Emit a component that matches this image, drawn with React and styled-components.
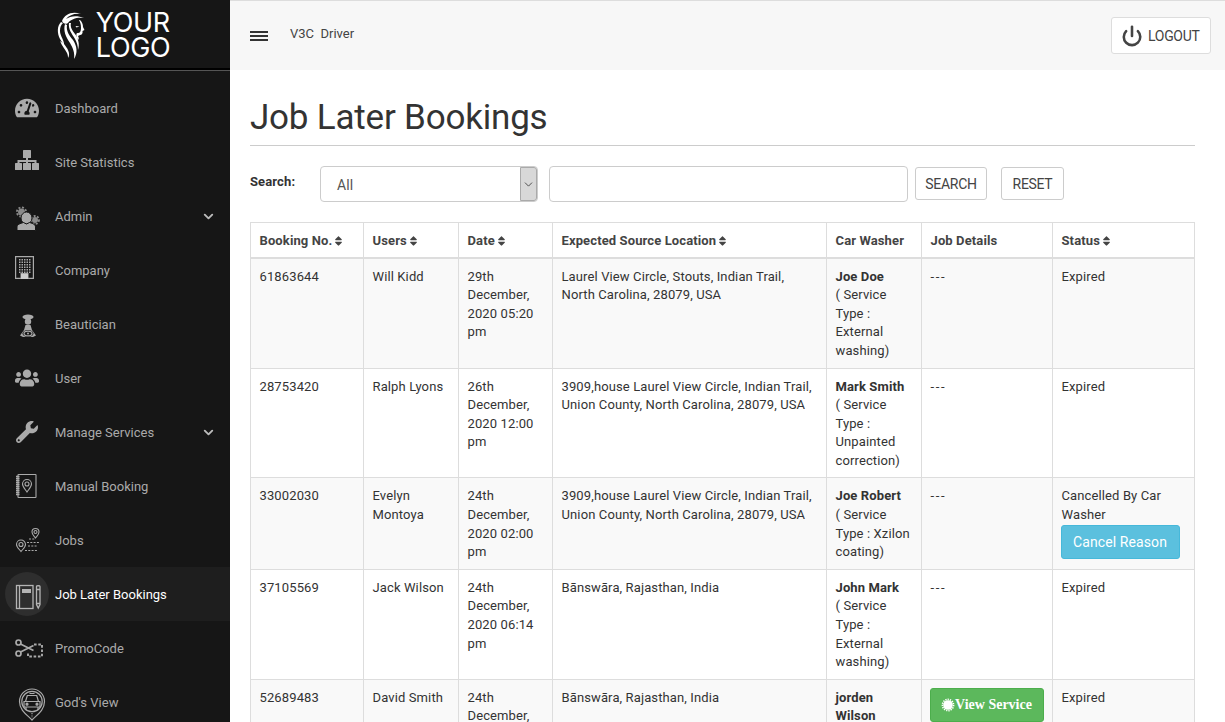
// Imports
import React from "react";
import styled, { createGlobalStyle } from "styled-components";
import { FaTachometerAlt, FaUsers, FaWrench, FaSort } from "react-icons/fa";
import { ChevronDown, Power } from "lucide-react";

// Global
const GlobalStyle = createGlobalStyle`
	html, body { margin: 0; padding: 0; height: 100%; overflow: hidden; background: #fff; }
	body { font-family: Roboto, "Noto Sans", sans-serif; font-size: 13px; line-height: 18.57px; letter-spacing: 0.12px; color: #333; }
	* { box-sizing: border-box; }
`;

// Drawn icons, all on a 44x44 canvas so they sit where the circle is
const SitemapIcon = () => (
	<DrawnSvg viewBox="0 0 44 44" $stroke="#aaa" $strokeW="2">
		<path d="M22 17v6M13.500 24v-3h17v3" />
		<g fill="#aaa" stroke="none">
			<rect x="18" y="10" width="8" height="8" rx="0.500" />
			<rect x="10" y="23" width="7" height="7" rx="0.500" />
			<rect x="18" y="23" width="8" height="7" rx="0.500" />
			<rect x="27" y="23" width="7" height="7" rx="0.500" />
		</g>
	</DrawnSvg>
);

const AdminIcon = () => (
	<DrawnSvg viewBox="0 0 44 44" $fill>
		<circle cx="16.500" cy="18" r="3.500" fill="#8a8a8a" />
		<circle cx="16.500" cy="18" r="4.600" fill="none" stroke="#8a8a8a" strokeWidth="1.800" strokeDasharray="2 1.600" />
		<circle cx="30" cy="26" r="3" fill="#8a8a8a" />
		<circle cx="30" cy="26" r="4" fill="none" stroke="#8a8a8a" strokeWidth="1.800" strokeDasharray="2 1.400" />
		<ellipse cx="21.500" cy="24" rx="5.500" ry="6" stroke="#161616" strokeWidth="1" />
		<path d="M12 36.500v-3.500c0-2.500 3-3.500 6.500-4.500l3 1.500 3-1.500c3.500 1 6 2 6 4.500v3.500z" stroke="#161616" strokeWidth="1" />
	</DrawnSvg>
);

const CompanyIcon = () => {
	const cols = [14, 16.500, 19, 21.500, 24];
	const rows = [11, 13.500, 16, 18.500, 21, 23.500];
	return (
		<DrawnSvg viewBox="0 0 44 44" $fill>
			<path fillRule="evenodd" d="M10 8h19v23H10zM11.200 9.200v20.600h4.300v-4.800h8v4.800h4.300V9.200z" />
			{rows.map((y) => cols.map((x) => <rect key={`${x}-${y}`} x={x} y={y} width="1.500" height="1.500" />))}
			<rect x="16" y="26" width="7" height="5" fill="#ccc" />
		</DrawnSvg>
	);
};

const BeauticianIcon = () => (
	<DrawnSvg viewBox="0 0 44 44" $fill>
		<g transform="translate(0 2.500)">
			<ellipse cx="23" cy="12.500" rx="5.500" ry="2.600" />
			<circle cx="23" cy="17" r="3.200" />
			<path d="M20.500 20.500h5l1.500 5 4 5.500-3 1.500h-10l-3-1.500 4-5.500z" />
			<ellipse cx="23" cy="29" rx="5.500" ry="3.500" fill="#161616" />
			<ellipse cx="23" cy="29" rx="4" ry="2.400" fill="none" stroke="#aaa" strokeWidth="1.200" />
			<circle cx="23" cy="29" r="1" />
		</g>
	</DrawnSvg>
);

const ManualIcon = () => (
	<DrawnSvg viewBox="0 0 44 44">
		<rect x="13" y="10.500" width="18" height="23" rx="0.500" />
		<path d="M11 12.500h3.500M11 14.500h3.500M11 16.500h3.500M11 18.500h3.500M11 20.500h3.500M11 22.500h3.500M11 24.500h3.500M11 26.500h3.500M11 28.500h3.500M11 30.500h3.500" strokeWidth="1.300" />
		<path d="M22 28c-2-3-4.500-5.300-4.500-8a4.500 4.500 0 0 1 9 0c0 2.700-2.500 5-4.500 8z" />
		<circle cx="22" cy="20" r="2" />
	</DrawnSvg>
);

const JobsIcon = () => (
	<DrawnSvg viewBox="0 0 44 44">
		<path d="M16 33.500c-2-2.500-4.500-4.500-4.500-7a4.500 4.500 0 0 1 9 0c0 2.500-2.500 4.500-4.500 7z" />
		<circle cx="16" cy="26.500" r="2" />
		<path d="M30.500 20c-1.500-2-3.500-3.500-3.500-6a3.500 3.500 0 0 1 7 0c0 2.500-2 4-3.500 6z" />
		<circle cx="30.500" cy="14" r="1.500" />
		<path d="M24 21h6M22 24.500h12M23 28h9M20 32.500h12" strokeDasharray="2 1.300" />
	</DrawnSvg>
);

const BookingIcon = () => (
	<DrawnSvg viewBox="0 0 44 44" $stroke="#b4b4b4" $strokeW="1.300">
		<rect x="11.500" y="13.500" width="16.500" height="23" />
		<path d="M14.500 13.500v23" />
		<rect x="17" y="17" width="9" height="4" fill="#b4b4b4" stroke="none" />
		<path d="M31.500 14.500c0-1 3.500-1 3.500 0v18l-1.750 3.500-1.750-3.500zM31.500 17.500h3.500M31.500 31.500h3.500" />
	</DrawnSvg>
);

const PromoIcon = () => (
	<DrawnSvg viewBox="0 0 44 44" $strokeW="1.700">
		<circle cx="13.500" cy="16.500" r="2.500" />
		<circle cx="13.500" cy="27.500" r="2.500" />
		<path d="M15.500 18l13 6.500M15.500 26l13-6.500" />
		<path d="M29 18.500h8v12h-14v-3" strokeDasharray="2.600 1.700" strokeWidth="1.900" />
	</DrawnSvg>
);

const GodsViewIcon = () => (
	<DrawnSvg viewBox="0 0 44 44" $strokeW="1.200">
		<path d="M27 40c-4-4.500-12.500-9-12.500-18.500a12.500 12.500 0 0 1 25 0C39.500 31 31 35.500 27 40z" />
		<circle cx="27" cy="21.500" r="10.200" />
		<path d="M20.500 21.500l1.800-6h9.400l1.800 6zM19 21.500h16v5.500H19zM21 27v2.500M33 27v2.500M24.500 13.500h5" />
		<circle cx="22" cy="24.200" r="1" fill="#aaa" />
		<circle cx="32" cy="24.200" r="1" fill="#aaa" />
		<path d="M27 33v5" strokeDasharray="1.200 1.200" />
	</DrawnSvg>
);

const LogoMark = () => (
	<LogoSvg viewBox="0 0 28 48">
		<path d="M5 10C8 3 15 0 24 3 18 2 12 4 9 8c4-3 11-4 18-1-7-1-13 1-16 5-3 2-5 0-6-2z" />
		<path d="M4 11C0 15 0 22 3 28c1 2 3 4 4 7 1-5-4-10-4-15 0-4 1-6 3-8z" />
		<path d="M8 13c-2 7 1 13 5 19 3 5 5 10 4 16 4-6 3-13-1-19-4-5-7-9-6-15z" />
		<path d="M12 12c-1 6 3 11 6 16 2 4 3 7 3 11 2-6 0-12-3-16-3-4-5-7-4-11z" />
		<path d="M3 30c2 5 5 8 7 12 1 2 1 4 1 5 3-5-1-10-4-14z" />
		<path d="M23 9c2 2 3 4 3 7l1.500 3-2 1c.5 2-.5 4-2.500 4l-2 1c1 2 1 3 0 4l-1-2c-1-3-1-5 1-5s3-2 3-5c0-4-1-6-2-8z" />
		<path d="M18.500 15l4 .5-3 1z" />
	</LogoSvg>
);

const BurstIcon = () => (
	<BurstSvg viewBox="0 0 14 14">
		<circle cx="7" cy="7" r="4.800" fill="#fff" />
		<circle cx="7" cy="7" r="5.600" fill="none" stroke="#fff" strokeWidth="1.600" strokeDasharray="1.300 1" />
	</BurstSvg>
);

// Data
const menu = [
	{ label: "Dashboard", icon: <FaTachometerAlt size={24} /> },
	{ label: "Site Statistics", icon: <SitemapIcon /> },
	{ label: "Admin", icon: <AdminIcon />, more: true },
	{ label: "Company", icon: <CompanyIcon /> },
	{ label: "Beautician", icon: <BeauticianIcon /> },
	{ label: "User", icon: <FaUsers size={24} /> },
	{ label: "Manage Services", icon: <FaWrench size={22} />, more: true },
	{ label: "Manual Booking", icon: <ManualIcon /> },
	{ label: "Jobs", icon: <JobsIcon /> },
	{ label: "Job Later Bookings", icon: <BookingIcon />, active: true },
	{ label: "PromoCode", icon: <PromoIcon /> },
	{ label: "God's View", icon: <GodsViewIcon /> },
];

const columns = [
	{ label: "Booking No.", width: 113, sort: true },
	{ label: "Users", width: 95, sort: true },
	{ label: "Date", width: 94, sort: true },
	{ label: "Expected Source Location", width: 274, sort: true },
	{ label: "Car Washer", width: 95 },
	{ label: "Job Details", width: 131 },
	{ label: "Status", width: 142, sort: true },
];

const bookings = [
	{ no: "61863644", user: "Will Kidd", date: "29th December, 2020 05:20 pm", place: ["Laurel View Circle, Stouts, Indian Trail,", "North Carolina, 28079, USA"], washer: "Joe Doe", service: "External washing", status: "Expired" },
	{ no: "28753420", user: "Ralph Lyons", date: "26th December, 2020 12:00 pm", place: ["3909,house Laurel View Circle, Indian Trail,", "Union County, North Carolina, 28079, USA"], washer: "Mark Smith", service: "Unpainted correction", status: "Expired" },
	{ no: "33002030", user: "Evelyn Montoya", date: "24th December, 2020 02:00 pm", place: ["3909,house Laurel View Circle, Indian Trail,", "Union County, North Carolina, 28079, USA"], washer: "Joe Robert", service: "Xzilon coating", status: "Cancelled By Car Washer", cancel: true },
	{ no: "37105569", user: "Jack Wilson", date: "24th December, 2020 06:14 pm", place: ["Bānswāra, Rajasthan, India"], washer: "John Mark", service: "External washing", status: "Expired" },
	{ no: "52689483", user: "David Smith", date: "24th December, 2020 04:30 pm", place: ["Bānswāra, Rajasthan, India"], washer: "jorden Wilson", service: "External washing", status: "Expired", view: true },
];

// Component
const App = () => (
	<Layout>
		<GlobalStyle />
		<Sidebar>
			<LogoBar>
				<LogoMark />
				<LogoText>YOUR<br />LOGO</LogoText>
			</LogoBar>
			<Nav>
				{menu.map((item) => (
					<NavItem key={item.label} $active={item.active}>
						<NavIcon $active={item.active}>{item.icon}</NavIcon>
						<NavLabel>{item.label}</NavLabel>
						{item.more && <Chevron size={15} strokeWidth={3} />}
					</NavItem>
				))}
			</Nav>
		</Sidebar>
		<Main>
			<Topbar>
				<Burger><span /><span /><span /></Burger>
				<Brand>V3C&nbsp; Driver</Brand>
				<LogoutButton><Power size={22} strokeWidth={2.8} />LOGOUT</LogoutButton>
			</Topbar>
			<Content>
				<Title>Job Later Bookings</Title>
				<SearchRow>
					<SearchLabel>Search:</SearchLabel>
					<SelectBox>
						All
						<SelectArrow><ChevronDown size={13} strokeWidth={1.5} /></SelectArrow>
					</SelectBox>
					<SearchInput />
					<PlainButton $width={72}>SEARCH</PlainButton>
					<PlainButton $width={63} $gap>RESET</PlainButton>
				</SearchRow>
				<Table>
					<colgroup>
						{columns.map((col) => <col key={col.label} width={col.width} />)}
					</colgroup>
					<thead>
						<tr>
							{columns.map((col) => (
								<th key={col.label}>{col.label}{col.sort && <SortIcon />}</th>
							))}
						</tr>
					</thead>
					<tbody>
						{bookings.map((row) => (
							<tr key={row.no}>
								<td>{row.no}</td>
								<td>{row.user}</td>
								<td>{row.date}</td>
								<td>{row.place.map((line) => <div key={line}>{line}</div>)}</td>
								<td><strong>{row.washer}</strong><br />( Service Type : {row.service})</td>
								<td>{row.view ? <ViewButton><BurstIcon />View Service</ViewButton> : <Dashes>---</Dashes>}</td>
								<td>
									{row.status}
									{row.cancel && <CancelButton>Cancel Reason</CancelButton>}
								</td>
							</tr>
						))}
					</tbody>
				</Table>
			</Content>
		</Main>
	</Layout>
);

// Styled
const Layout = styled.div`
	display: flex;
	width: 100%;
	height: 100vh;
	overflow: hidden;
`;

const Sidebar = styled.aside`
	flex: 0 0 230px;
	background: #161616;
	overflow: hidden;
`;

const LogoBar = styled.div`
	display: flex;
	align-items: center;
	justify-content: center;
	gap: 11px;
	height: 71px;
	padding-right: 3px;
	border-bottom: 1px solid #555;
	box-shadow: inset 0 -2px 0 #000;
`;

const LogoSvg = styled.svg`
	width: 28px;
	height: 48px;
	fill: #fff;
`;

const LogoText = styled.div`
	font-family: Inter, sans-serif;
	font-size: 27px;
	font-weight: 400;
	line-height: 25px;
	letter-spacing: -0.4px;
	color: #fff;
`;

const Nav = styled.nav`
	padding-top: 10px;
`;

const NavItem = styled.div`
	display: flex;
	align-items: center;
	height: 54px;
	padding: 0 14px 0 5px;
	color: ${(p) => (p.$active ? "#fff" : "#aaa")};
	background: ${(p) => (p.$active ? "#1e1e1e" : "transparent")};
`;

const NavIcon = styled.div`
	display: flex;
	align-items: center;
	justify-content: center;
	flex: 0 0 44px;
	height: 44px;
	border-radius: 50%;
	color: #aaa;
	background: ${(p) => (p.$active ? "#2e2e2e" : "transparent")};
`;

const DrawnSvg = styled.svg`
	width: 44px;
	height: 44px;
	fill: ${(p) => (p.$fill ? "#aaa" : "none")};
	stroke: ${(p) => (p.$fill ? "none" : p.$stroke || "#aaa")};
	stroke-width: ${(p) => p.$strokeW || 1.1}px;
`;

const NavLabel = styled.span`
	flex: 1;
	margin-left: 6px;
	padding-top: 2px;
	letter-spacing: 0;
`;

const Chevron = styled(ChevronDown)`
	color: #bbb;
`;

const Main = styled.main`
	flex: 1;
	min-width: 0;
`;

const Topbar = styled.header`
	display: flex;
	align-items: center;
	height: 70px;
	padding: 0 14px 0 20px;
	background: #f7f7f7;
	border-top: 1px solid #ddd;
`;

const Burger = styled.div`
	display: flex;
	flex-direction: column;
	gap: 2px;
	width: 18px;
	margin-right: 22px;
	span {
		height: 2px;
		background: #333;
	}
`;

const Brand = styled.div`
	flex: 1;
	margin-bottom: 2px;
	letter-spacing: 0;
	color: #444;
`;

const LogoutButton = styled.button`
	display: flex;
	align-items: center;
	gap: 5px;
	width: 100px;
	height: 37px;
	padding: 0 0 0 9px;
	font: 14px Roboto, sans-serif;
	letter-spacing: -0.3px;
	color: #444;
	background: #fff;
	border: 1px solid #ddd;
	border-radius: 3px;
`;

const Content = styled.div`
	padding: 0 30px 0 20px;
`;

const Title = styled.h1`
	margin: 28px 0 0;
	padding-bottom: 7px;
	font-size: 35px;
	font-weight: 400;
	line-height: 40px;
	letter-spacing: -0.2px;
	color: #333;
	border-bottom: 1px solid #ccc;
`;

const SearchRow = styled.div`
	display: flex;
	align-items: center;
	height: 36px;
	margin-top: 20px;
`;

const SearchLabel = styled.label`
	flex: 0 0 70px;
	align-self: flex-start;
	margin-top: 7px;
	font-weight: 700;
`;

const SelectBox = styled.div`
	position: relative;
	width: 218px;
	height: 36px;
	padding: 8.500px 16px;
	font-size: 14px;
	color: #555;
	border: 1px solid #ccc;
	border-radius: 4px;
`;

const SelectArrow = styled.span`
	position: absolute;
	top: 0;
	right: 0;
	display: flex;
	align-items: center;
	justify-content: center;
	width: 17px;
	height: 34px;
	color: #333;
	background: #d8d8d8;
	border: 1px solid #aaa;
	border-radius: 0 3px 3px 0;
`;

const SearchInput = styled.input`
	width: 359px;
	height: 36px;
	margin: 0 7px 0 11px;
	background: #fff;
	border: 1px solid #ccc;
	border-radius: 4px;
`;

const PlainButton = styled.button`
	width: ${(p) => p.$width}px;
	height: 33px;
	margin: 0 0 1px ${(p) => (p.$gap ? "14px" : "0")};
	padding: 0;
	font: 14px Roboto, sans-serif;
	letter-spacing: -0.3px;
	color: #444;
	background: #fff;
	border: 1px solid #ccc;
	border-radius: 3px;
`;

const Table = styled.table`
	width: 944px;
	margin-top: 20px;
	table-layout: fixed;
	border-collapse: collapse;
	th, td {
		padding: 9px 8px 7.150px 8.500px;
		text-align: left;
		vertical-align: top;
		border: 1px solid #ddd;
	}
	th {
		padding: 9px 8px 6px 8.500px;
		color: #444;
		font-weight: 700;
		border-bottom-width: 2px;
	}
	tbody tr:nth-child(odd) {
		background: #f9f9f9;
	}
	strong {
		font-weight: 700;
	}
`;

const SortIcon = styled(FaSort)`
	margin-left: 2px;
	width: 9px;
	height: 12px;
	vertical-align: -2px;
	color: #444;
`;

const Dashes = styled.span`
	letter-spacing: 1.600px;
`;

const CancelButton = styled.button`
	display: block;
	width: 119px;
	height: 34px;
	margin-left: -1px;
	font: 14px Roboto, sans-serif;
	letter-spacing: 0.100px;
	color: #fff;
	background: #5bc0de;
	border: 1px solid #46b8da;
	border-radius: 3px;
`;

const ViewButton = styled.button`
	display: flex;
	align-items: center;
	justify-content: center;
	width: 114px;
	height: 34px;
	margin: -1px 0 0 -1px;
	padding: 1px 0 0;
	font: 700 14px "Liberation Serif", serif;
	letter-spacing: 0;
	color: #fff;
	background: #5cb85c;
	border: 1px solid #4cae4c;
	border-radius: 3px;
`;

const BurstSvg = styled.svg`
	width: 14px;
	height: 14px;
`;

// Export
export default App;
